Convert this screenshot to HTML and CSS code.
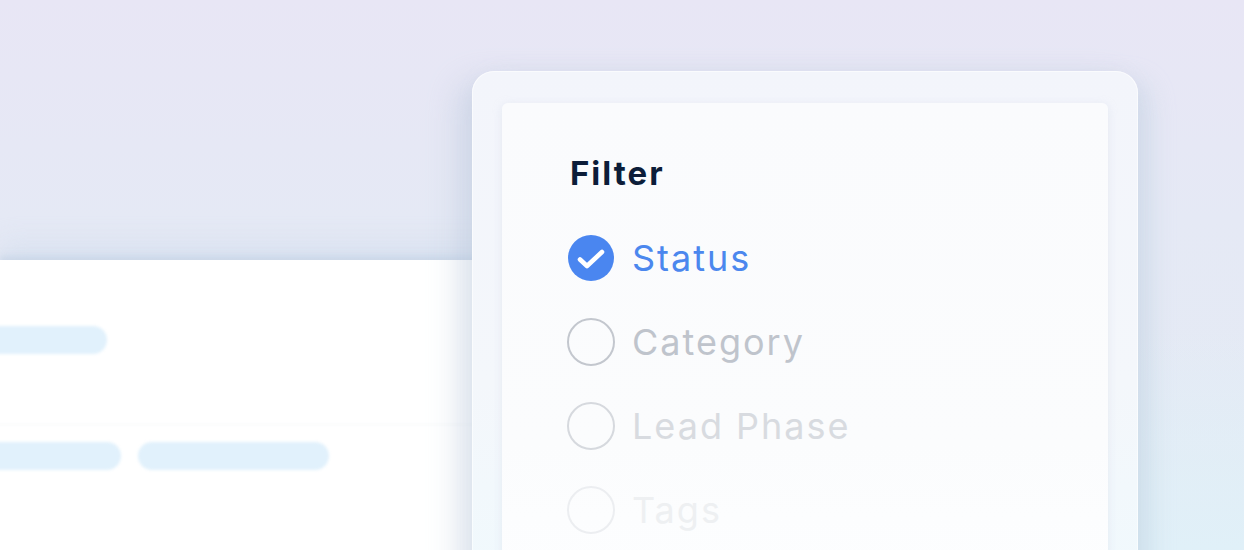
FILE: index.html
```html
<!DOCTYPE html>
<html>
<head>
<meta charset="utf-8">
<link rel="stylesheet" href="styles.css">
</head>
<body>
<div class="stage">
  <div class="panel">
    <div class="panel-row first">
      <span class="pill pill-a"></span>
    </div>
    <div class="panel-row second">
      <span class="pill pill-b"></span>
      <span class="pill pill-c"></span>
    </div>
  </div>
  <div class="card">
    <div class="sheet">
      <h2 class="title">Filter</h2>
      <ul class="options">
        <li class="option checked">
          <span class="radio">
            <svg viewBox="0 0 46 46" width="46" height="46"><polyline points="12,24.5 19,31 34,17" fill="none" stroke="#fff" stroke-width="4.6" stroke-linecap="round" stroke-linejoin="round"/></svg>
          </span>
          <span class="label">Status</span>
        </li>
        <li class="option o2"><span class="radio"></span><span class="label">Category</span></li>
        <li class="option o3"><span class="radio"></span><span class="label">Lead Phase</span></li>
        <li class="option o4"><span class="radio"></span><span class="label">Tags</span></li>
      </ul>
    </div>
  </div>
</div>
</body>
</html>
```
FILE: styles.css
```css
* { box-sizing: border-box; }
html, body { margin: 0; padding: 0; }
body {
  width: 1244px;
  height: 550px;
  overflow: hidden;
  font-family: "Inter", "Noto Sans", sans-serif;
  background:
    linear-gradient(180deg, rgba(232,230,245,0) 60%, rgba(224,240,248,1) 100%),
    linear-gradient(180deg, #e8e6f5 0%, #e5e9f5 40%, #e4ebf4 100%);
}
.stage {
  position: relative;
  display: flow-root;
  width: 1244px;
  height: 550px;
  overflow: hidden;
}
.panel {
  margin-top: 260px;
  width: 820px;
  height: 290px;
  background: #ffffff;
  box-shadow: 0 -4px 6px rgba(190, 205, 225, 0.5), 0 -18px 24px rgba(205, 218, 235, 0.45);
  display: flex;
  flex-direction: column;
}
.panel-row {
  display: flex;
  gap: 17px;
  margin-left: -20px;
  filter: blur(1.5px);
}
.panel-row.first {
  margin-top: 66px;
  padding-bottom: 70px;
  border-bottom: 1px solid #f5f6f8;
}
.panel-row.second { margin-top: 17px; }
.pill {
  display: block;
  height: 28px;
  border-radius: 14px;
  background: #e1f1fc;
}
.pill-a { width: 127px; }
.pill-b { width: 141px; }
.pill-c { width: 191px; }

.card {
  position: absolute;
  left: 472px;
  top: 71px;
  width: 666px;
  height: 520px;
  border-radius: 22px;
  background: linear-gradient(180deg, #f3f5fb 0%, #f4f7fb 60%, #f0f9fd 100%);
  box-shadow: -14px 10px 30px rgba(180, 195, 215, 0.45), 12px 10px 24px rgba(185, 205, 222, 0.4), 0 0 0 1px rgba(255,255,255,0.6) inset;
  padding: 32px 30px 0 30px;
}
.sheet {
  height: 100%;
  border-radius: 6px;
  background: linear-gradient(180deg, #fafbfd 0%, #fbfcfd 70%, #fdfeff 100%);
  box-shadow: 0 2px 10px rgba(200, 210, 225, 0.35);
  padding: 50px 0 0 68px;
}
.title {
  margin: 0;
  font-size: 33px;
  line-height: 40px;
  font-weight: 700;
  color: #0c1d39;
  letter-spacing: 2px;
}
.options {
  list-style: none;
  margin: 41px 0 0 -3px;
  padding: 0;
  display: flex;
  flex-direction: column;
  gap: 36px;
}
.option {
  display: flex;
  align-items: center;
  gap: 17px;
  height: 48px;
}
.radio {
  width: 48px;
  height: 48px;
  border-radius: 50%;
  border: 2px solid #c3c7ce;
  display: flex;
  align-items: center;
  justify-content: center;
  flex: none;
}
.label {
  font-size: 36px;
  line-height: 48px;
  font-weight: 400;
  letter-spacing: 2px;
}
.checked .radio {
  width: 46px;
  height: 46px;
  margin: 0 1px 0 1px;
  border: none;
  background: #4a86f0;
}
.checked .label { color: #4b87ee; }
.o2 .label { color: #bfc4cc; }
.o3 .radio { border-color: #d6d9de; }
.o3 .label { color: #d8dbe0; }
.o4 .radio { border-color: #eceef1; }
.o4 .label { color: #eef0f2; }
```
